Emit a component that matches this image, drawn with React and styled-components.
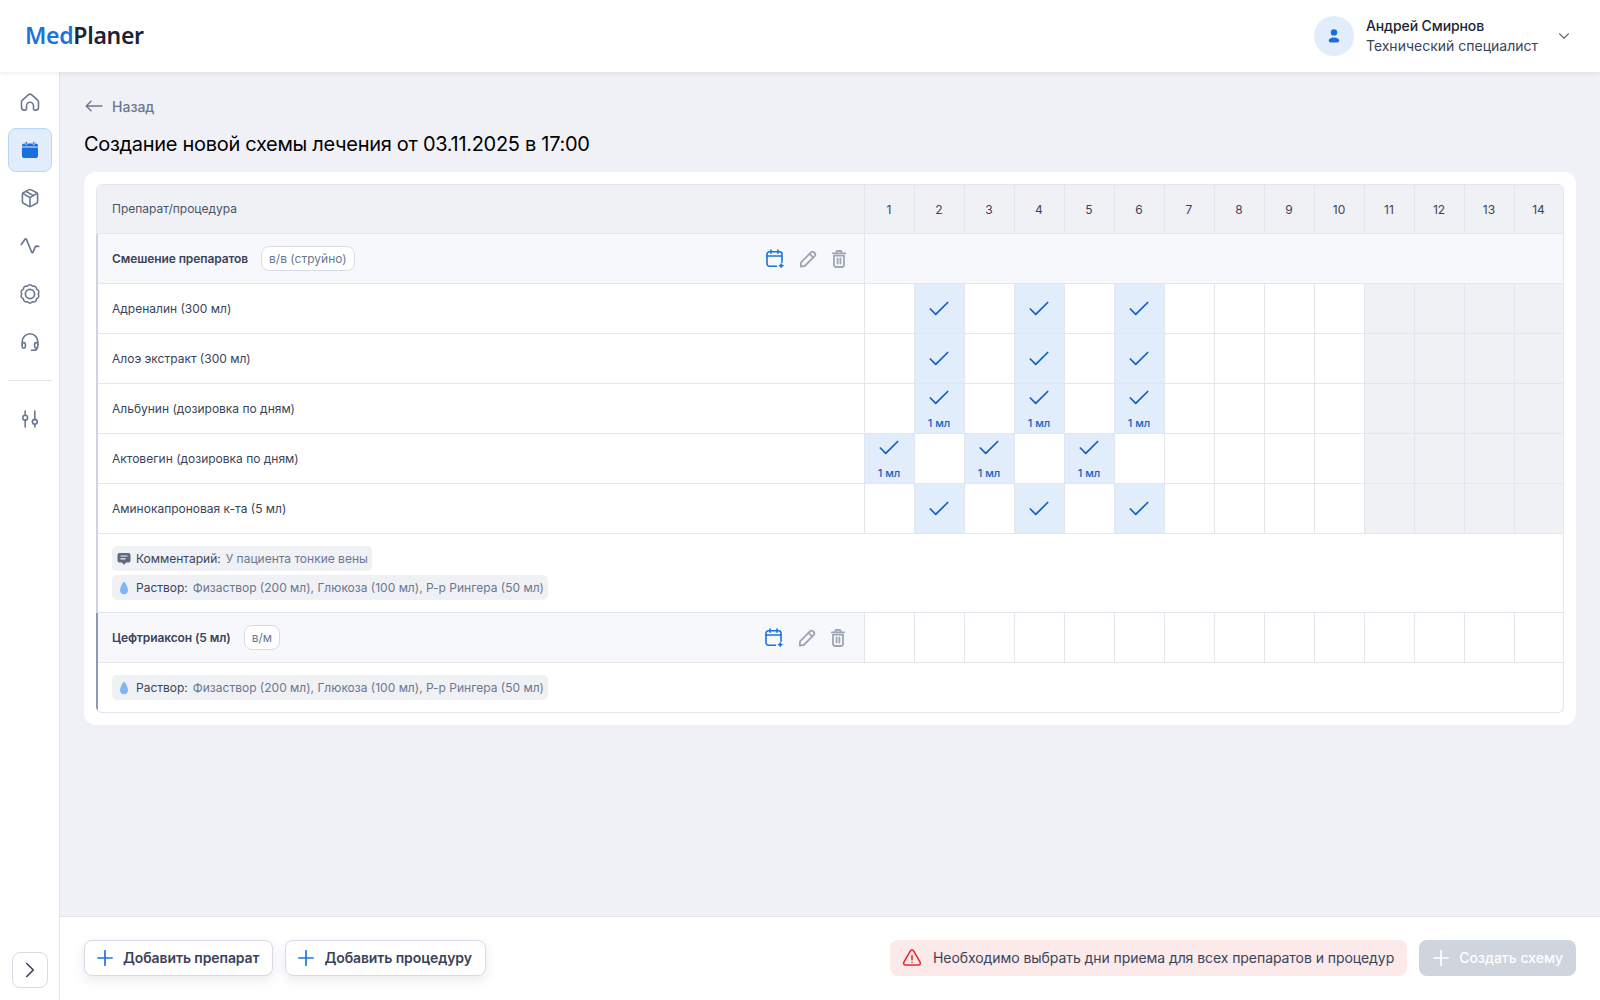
import React from "react";
import styled, { createGlobalStyle } from "styled-components";
import { ChevronDown, ChevronRight, Check } from "lucide-react";

const GlobalStyle = createGlobalStyle`
  html, body { margin: 0; padding: 0; height: 100%; }
  body { font-family: Inter, "Liberation Sans", sans-serif; background: #f0f1f6; color: #3a4459; }
  * { box-sizing: border-box; }
`;

const days = Array.from({ length: 14 }, (_, i) => i + 1);

const groupOne = [
  { name: "Адреналин (300 мл)", on: [2, 4, 6] },
  { name: "Алоэ экстракт (300 мл)", on: [2, 4, 6] },
  { name: "Альбунин (дозировка по дням)", on: [2, 4, 6], dose: true },
  { name: "Актовегин (дозировка по дням)", on: [1, 3, 5], dose: true },
  { name: "Аминокапроновая к-та (5 мл)", on: [2, 4, 6] },
];

const solution = "Физаствор (200 мл), Глюкоза (100 мл), Р-р Рингера (50 мл)";

// outer ring of the settings icon, small bumps around a circle
const scallop = (() => {
  const n = 10;
  const r = 8.1;
  const pts = Array.from({ length: n }, (_, i) => {
    const a = (i / n) * Math.PI * 2;
    return [10 + r * Math.cos(a), 10 + r * Math.sin(a)];
  });
  const arcs = pts.map((_, i) => {
    const p = pts[(i + 1) % n];
    return `A2.9 2.9 0 0 1 ${p[0].toFixed(2)} ${p[1].toFixed(2)}`;
  });
  return `M${pts[0][0].toFixed(2)} ${pts[0][1].toFixed(2)}${arcs.join("")}Z`;
})();

function HomeIcon() {
  return (
    <svg width="20" height="20" viewBox="0 0 20 20" fill="none" stroke="#6b7791" strokeWidth="1.6" strokeLinejoin="round" strokeLinecap="round">
      <path d="M2.2 8.3 8.2 2.9a2.7 2.7 0 0 1 3.6 0l6 5.4c.5.4.7 1 .7 1.6v5.4a2.8 2.8 0 0 1-2.8 2.8h-1.1a1.1 1.1 0 0 1-1.1-1.1v-3.2a3.5 3.5 0 0 0-7 0v3.2a1.1 1.1 0 0 1-1.1 1.1H4.3a2.8 2.8 0 0 1-2.8-2.8V9.9c0-.6.2-1.2.7-1.6Z" />
    </svg>
  );
}

function CalendarFillIcon() {
  return (
    <svg width="18" height="18" viewBox="0 0 18 18" fill="#1b6fdc">
      <path d="M1 4.6C1 3.3 2 2.4 3.4 2.4h11.2C16 2.4 17 3.3 17 4.6v.9H1v-.9Z" />
      <path d="M1 6.5h16v8.2c0 1.4-1.1 2.3-2.5 2.3h-11C2.1 17 1 16.1 1 14.7V6.5Z" />
      <rect x="4.4" y=".4" width="1.7" height="3.6" rx=".85" stroke="#e1edfb" strokeWidth=".6" />
      <rect x="11.9" y=".4" width="1.7" height="3.6" rx=".85" stroke="#e1edfb" strokeWidth=".6" />
    </svg>
  );
}

function BoxIcon() {
  return (
    <svg width="20" height="20" viewBox="0 0 20 20" fill="none" stroke="#6b7791" strokeWidth="1.6" strokeLinejoin="round" strokeLinecap="round">
      <path d="M8.6 1.9a2.8 2.8 0 0 1 2.8 0l5.3 2.9c.6.3.9.9.9 1.5v7.3c0 .7-.3 1.3-.9 1.6l-5.3 2.9a2.8 2.8 0 0 1-2.8 0l-5.3-2.9c-.6-.3-.9-.9-.9-1.6V6.3c0-.6.3-1.2.9-1.5l5.3-2.9Z" />
      <path d="M2.8 5.4 10 9.6l7.2-4.2M10 9.6v8.9M6 3.4l7.6 4.3" />
    </svg>
  );
}

function PulseIcon() {
  return (
    <svg width="20" height="20" viewBox="0 0 20 20" fill="none" stroke="#6b7791" strokeWidth="1.7" strokeLinejoin="round" strokeLinecap="round">
      <path d="M1.3 8.5 5 3.2c.4-.5 1.1-.5 1.4.1l5.3 12.9c.3.6 1 .7 1.4.1l2.1-5.4c.2-.5.6-.8 1.2-.8l2.3.3" />
    </svg>
  );
}

function RingIcon() {
  return (
    <svg width="20" height="20" viewBox="0 0 20 20" fill="none" stroke="#6b7791" strokeWidth="1.5" strokeLinejoin="round">
      <path d={scallop} />
      <circle cx="10" cy="10" r="4.6" strokeWidth="1.7" />
    </svg>
  );
}

function HeadsetIcon() {
  return (
    <svg width="20" height="20" viewBox="0 0 20 20" fill="none" stroke="#6b7791" strokeWidth="1.6" strokeLinejoin="round" strokeLinecap="round">
      <path d="M2.2 13V9.6a7.8 7.8 0 0 1 15.6 0V13" />
      <rect x="2.2" y="10.6" width="3.2" height="5.6" rx="1.6" />
      <rect x="14.6" y="10.6" width="3.2" height="5.6" rx="1.6" />
      <path d="M17.2 16c-.4 1.4-1.6 2.3-3.2 2.3h-2.6" />
    </svg>
  );
}

function SlidersIcon() {
  return (
    <svg width="20" height="20" viewBox="0 0 20 20" fill="none" stroke="#6b7791" strokeWidth="1.6" strokeLinecap="round">
      <path d="M5.2 2v4.2M5.2 11.2V18M14.8 2v8.4M14.8 15.2V18" />
      <circle cx="5.2" cy="8.7" r="2.4" />
      <circle cx="14.8" cy="12.8" r="2.4" />
    </svg>
  );
}

function UserIcon() {
  return (
    <svg width="16" height="16" viewBox="0 0 16 16" fill="#1b6fdc">
      <circle cx="8" cy="4.4" r="3.2" />
      <path d="M8 9.4c-3.1 0-5.3 1.4-5.3 3.2 0 1.2 1 1.9 2.2 1.9h6.2c1.2 0 2.2-.7 2.2-1.9 0-1.8-2.2-3.2-5.3-3.2Z" />
    </svg>
  );
}

function BackArrow() {
  return (
    <svg width="18" height="12" viewBox="0 0 18 12" fill="none" stroke="#6b7791" strokeWidth="1.4" strokeLinecap="round" strokeLinejoin="round">
      <path d="M17 6H1.2M6 1.2 1.2 6 6 10.8" />
    </svg>
  );
}

function CalendarPlusIcon() {
  return (
    <svg width="18" height="19" viewBox="0 0 18 19" fill="none" stroke="#1b73e0" strokeWidth="1.6" strokeLinecap="round" strokeLinejoin="round">
      <path d="M10.5 17.2H3.4A2.4 2.4 0 0 1 1 14.8V5.2a2.4 2.4 0 0 1 2.4-2.4h10.2A2.4 2.4 0 0 1 16 5.2v8" />
      <path d="M1 7h15M5 1v3.2M12 1v3.2M15.2 15v3.2M13.6 16.6h3.4" />
    </svg>
  );
}

function PencilIcon() {
  return (
    <svg width="18" height="18" viewBox="0 0 18 18" fill="none" stroke="#9ea5b4" strokeWidth="1.8" strokeLinecap="round" strokeLinejoin="round">
      <path d="M2 12.3 11.9 2.4a2.2 2.2 0 0 1 3.1 0l.6.6a2.2 2.2 0 0 1 0 3.1L5.7 16 1.8 16.6 2 12.3Z" />
      <path d="m10.6 3.9 3.5 3.5" />
    </svg>
  );
}

function TrashIcon() {
  return (
    <svg width="16" height="18" viewBox="-1 0 16 18" fill="none" stroke="#9ea5b4" strokeWidth="1.8" strokeLinecap="round" strokeLinejoin="round">
      <path d="M.8 3.4h12.4M4.4 3V2a1 1 0 0 1 1-1h3.2a1 1 0 0 1 1 1v1" />
      <path d="M2 5.6v9.2A2.2 2.2 0 0 0 4.2 17h5.6a2.2 2.2 0 0 0 2.2-2.2V5.6Z" />
      <path d="M5.6 8.4v5.2M8.4 8.4v5.2" />
    </svg>
  );
}

function CommentIcon() {
  return (
    <svg width="14" height="14" viewBox="0 0 14 14" fill="#5f6a80">
      <path d="M2.4 1h9.2a1.9 1.9 0 0 1 1.9 1.9v5.6a1.9 1.9 0 0 1-1.9 1.9H9.2L7 12.8 4.8 10.4H2.4A1.9 1.9 0 0 1 .5 8.5V2.9A1.9 1.9 0 0 1 2.4 1Z" />
      <path d="M3.5 4h7M3.5 6.8h5" stroke="#f0f1f6" strokeWidth="1.2" />
    </svg>
  );
}

function DropIcon() {
  return (
    <svg width="14" height="14" viewBox="0 0 14 14" fill="#7fb6f5">
      <path d="M7 .8c.4 0 2 2 2.9 4.3.6 1.5 1.1 2.9 1.1 4.1 0 2.4-1.8 4-4 4s-4-1.6-4-4c0-1.2.5-2.6 1.1-4.1C5 2.8 6.6.8 7 .8Z" />
    </svg>
  );
}

function WarningIcon() {
  return (
    <svg width="20" height="20" viewBox="0 0 20 20" fill="none" stroke="#e02d2d" strokeWidth="1.6" strokeLinecap="round" strokeLinejoin="round">
      <path d="M8.4 2.9a1.9 1.9 0 0 1 3.2 0l6.5 11.2a1.9 1.9 0 0 1-1.6 2.9H3.5a1.9 1.9 0 0 1-1.6-2.9L8.4 2.9Z" />
      <path d="M10 7.5v4.2M10 14.2v.1" />
    </svg>
  );
}

function PlusIcon({ color }) {
  return (
    <svg width="16" height="16" viewBox="0 0 16 16" fill="none" stroke={color} strokeWidth="1.7" strokeLinecap="round">
      <path d="M8 .8v14.4M.8 8h14.4" />
    </svg>
  );
}

function DayCell({ day, on, dose }) {
  const active = on.includes(day);
  return (
    <Cell $active={active} $off={day > 10} $top={active && dose}>
      {active && <Check size={26} strokeWidth={1.6} color="#1560bd" />}
      {active && dose && <Dose>1 мл</Dose>}
    </Cell>
  );
}

export default function App() {
  return (
    <Page>
      <GlobalStyle />
      <Header>
        <Logo>
          <LogoMed>Med</LogoMed>Planer
        </Logo>
        <UserBox>
          <Avatar>
            <UserIcon />
          </Avatar>
          <UserText>
            <UserName>Андрей Смирнов</UserName>
            <UserRole>Технический специалист</UserRole>
          </UserText>
          <ChevronDown size={18} strokeWidth={1.5} color="#5f6a80" />
        </UserBox>
      </Header>
      <Body>
        <Sidebar>
          <NavItem>
            <HomeIcon />
          </NavItem>
          <NavItem $active>
            <CalendarFillIcon />
          </NavItem>
          <NavItem>
            <BoxIcon />
          </NavItem>
          <NavItem>
            <PulseIcon />
          </NavItem>
          <NavItem>
            <RingIcon />
          </NavItem>
          <NavItem>
            <HeadsetIcon />
          </NavItem>
          <NavDivider />
          <NavItem>
            <SlidersIcon />
          </NavItem>
          <ToggleButton>
            <ChevronRight size={26} strokeWidth={1.5} color="#3a4459" />
          </ToggleButton>
        </Sidebar>
        <Main>
          <Content>
            <BackLink>
              <BackArrow />
              Назад
            </BackLink>
            <Title>Создание новой схемы лечения от 03.11.2025 в 17:00</Title>
            <Card>
              <Table>
                <HeadRow>
                  <HeadName>Препарат/процедура</HeadName>
                  {days.map((d) => (
                    <HeadDay key={d}>{d}</HeadDay>
                  ))}
                </HeadRow>
                <Group>
                  <Row>
                    <GroupName>
                      <GroupTitle>Смешение препаратов</GroupTitle>
                      <Tag>в/в (струйно)</Tag>
                      <Actions>
                        <CalendarPlusIcon />
                        <PencilIcon />
                        <TrashIcon />
                      </Actions>
                    </GroupName>
                    <GroupFill />
                  </Row>
                  {groupOne.map((item) => (
                    <Row key={item.name}>
                      <DrugName>{item.name}</DrugName>
                      {days.map((d) => (
                        <DayCell key={d} day={d} on={item.on} dose={item.dose} />
                      ))}
                    </Row>
                  ))}
                  <Notes>
                    <Chip>
                      <CommentIcon />
                      <ChipLabel>Комментарий:</ChipLabel>
                      <ChipText>У пациента тонкие вены</ChipText>
                    </Chip>
                    <Chip>
                      <DropIcon />
                      <ChipLabel>Раствор:</ChipLabel>
                      <ChipText>{solution}</ChipText>
                    </Chip>
                  </Notes>
                </Group>
                <Group $dark>
                  <Row>
                    <GroupName>
                      <GroupTitle>Цефтриаксон (5 мл)</GroupTitle>
                      <Tag>в/м</Tag>
                      <Actions $shifted>
                        <CalendarPlusIcon />
                        <PencilIcon />
                        <TrashIcon />
                      </Actions>
                    </GroupName>
                    {days.map((d) => (
                      <Cell key={d} />
                    ))}
                  </Row>
                  <Notes $last>
                    <Chip>
                      <DropIcon />
                      <ChipLabel>Раствор:</ChipLabel>
                      <ChipText>{solution}</ChipText>
                    </Chip>
                  </Notes>
                </Group>
              </Table>
            </Card>
          </Content>
          <Footer>
            <AddButton>
              <PlusIcon color="#1b73e0" />
              Добавить препарат
            </AddButton>
            <AddButton>
              <PlusIcon color="#1b73e0" />
              Добавить процедуру
            </AddButton>
            <Alert>
              <WarningIcon />
              Необходимо выбрать дни приема для всех препаратов и процедур
            </Alert>
            <CreateButton>
              <PlusIcon color="#fff" />
              Создать схему
            </CreateButton>
          </Footer>
        </Main>
      </Body>
    </Page>
  );
}

const Page = styled.div`
  width: 1600px;
  height: 1000px;
  display: flex;
  flex-direction: column;
  overflow: hidden;
`;

const Header = styled.header`
  height: 72px;
  flex: none;
  background: #fff;
  display: flex;
  align-items: center;
  justify-content: space-between;
  padding: 0 27px 0 25px;
  box-shadow: 0 1px 4px rgba(40, 50, 80, 0.1);
  position: relative;
  z-index: 2;
`;

const Logo = styled.div`
  font-family: "Noto Sans", sans-serif;
  font-size: 23px;
  font-weight: 600;
  letter-spacing: -0.3px;
  color: #1b2436;
  margin-top: -2px;
`;

const LogoMed = styled.span`
  color: #1b73e0;
`;

const UserBox = styled.div`
  display: flex;
  align-items: center;
`;

const Avatar = styled.div`
  width: 40px;
  height: 40px;
  border-radius: 50%;
  background: #e1edfb;
  display: flex;
  align-items: center;
  justify-content: center;
  margin-right: 12px;
`;

const UserText = styled.div`
  display: flex;
  flex-direction: column;
  margin-right: 17px;
`;

const UserName = styled.div`
  font-size: 14px;
  line-height: 20px;
  font-weight: 500;
  letter-spacing: -0.1px;
  color: #1b2436;
`;

const UserRole = styled.div`
  font-size: 14px;
  line-height: 20px;
  color: #3a4459;
`;

const Body = styled.div`
  flex: 1;
  display: flex;
  min-height: 0;
`;

const Sidebar = styled.aside`
  width: 60px;
  flex: none;
  background: #fff;
  border-right: 1px solid #e3e6ec;
  padding: 8px 7px 12px 8px;
  display: flex;
  flex-direction: column;
  gap: 4px;
`;

const NavItem = styled.div`
  width: 44px;
  height: 44px;
  flex: none;
  border-radius: 8px;
  display: flex;
  align-items: center;
  justify-content: center;
  background: ${(p) => (p.$active ? "#e1edfb" : "transparent")};
  border: 1px solid ${(p) => (p.$active ? "#b9d6f8" : "transparent")};
`;

const NavDivider = styled.div`
  height: 1px;
  flex: none;
  background: #e3e6ec;
  margin: 12px 0;
`;

const ToggleButton = styled.div`
  width: 36px;
  height: 36px;
  margin: auto 0 0 4px;
  border: 1px solid #d7dbe5;
  border-radius: 8px;
  display: flex;
  align-items: center;
  justify-content: center;
`;

const Main = styled.main`
  flex: 1;
  min-width: 0;
  display: flex;
  flex-direction: column;
`;

const Content = styled.div`
  flex: 1;
  min-height: 0;
  padding: 24px 24px 0;
`;

const BackLink = styled.div`
  height: 20px;
  padding-left: 1px;
  display: flex;
  align-items: center;
  gap: 9px;
  font-size: 14px;
  font-weight: 500;
  color: #6b7791;
`;

const Title = styled.h1`
  margin: 14px 0;
  font-size: 20px;
  line-height: 28px;
  font-weight: 400;
  letter-spacing: -0.3px;
  color: #000;
`;

const Card = styled.section`
  background: #fff;
  border-radius: 12px;
  padding: 12px;
`;

const Table = styled.div`
  border: 1px solid #e3e6ec;
  border-left: 0;
  border-radius: 6px;
  overflow: hidden;
`;

const Row = styled.div`
  display: grid;
  grid-template-columns: 1fr repeat(13, 50px) 49px;
  height: 50px;
  border-bottom: 1px solid #e3e6ec;
`;

const HeadRow = styled(Row)`
  height: 49px;
  background: #f0f1f5;
`;

const HeadName = styled.div`
  display: flex;
  align-items: center;
  padding: 0 0 1px 15px;
  font-size: 12px;
  color: #4a5468;
  border-left: 1px solid #e3e6ec;
`;

const HeadDay = styled.div`
  display: flex;
  align-items: center;
  justify-content: center;
  padding-right: 1px;
  font-size: 12px;
  color: #3a4459;
  border-left: 1px solid #e3e6ec;
`;

const Group = styled.div`
  border-left: 2px solid ${(p) => (p.$dark ? "#8e99b3" : "#cfd4e1")};
`;

const GroupName = styled.div`
  display: flex;
  align-items: center;
  padding-left: 14px;
  background: #f7f8fc;
`;

const GroupTitle = styled.span`
  font-size: 12px;
  font-weight: 600;
  letter-spacing: -0.1px;
  color: #3a4459;
`;

const Tag = styled.span`
  margin-left: 13px;
  height: 25px;
  padding: 0 7px;
  display: flex;
  align-items: center;
  font-size: 12px;
  color: #6b7791;
  background: #fff;
  border: 1px solid #d7dbe5;
  border-radius: 8px;
`;

const Actions = styled.div`
  margin-left: auto;
  padding-right: ${(p) => (p.$shifted ? "18px" : "17px")};
  display: flex;
  align-items: center;
  gap: 14.5px;
`;

const GroupFill = styled.div`
  grid-column: 2 / -1;
  background: #f7f8fc;
  border-left: 1px solid #e3e6ec;
`;

const DrugName = styled.div`
  display: flex;
  align-items: center;
  padding-left: 14px;
  font-size: 12px;
  color: #3a4459;
`;

const Cell = styled.div`
  border-left: 1px solid #e3e6ec;
  padding: ${(p) => (p.$top ? "1px" : "0")} 1px 0 0;
  display: flex;
  flex-direction: column;
  align-items: center;
  justify-content: ${(p) => (p.$top ? "flex-start" : "center")};
  background: ${(p) => (p.$active ? "#e1edfb" : p.$off ? "#f0f1f5" : "#fff")};
`;

const Dose = styled.span`
  font-size: 11px;
  line-height: 12px;
  font-weight: 500;
  color: #1560bd;
  margin-top: 6px;
`;

const Notes = styled.div`
  padding: 12px 14px;
  display: flex;
  flex-direction: column;
  align-items: flex-start;
  gap: 4px;
  border-bottom: ${(p) => (p.$last ? "0" : "1px solid #e3e6ec")};
`;

const Chip = styled.div`
  height: 25px;
  padding: 0 4px 0 5px;
  display: flex;
  align-items: center;
  font-size: 12px;
  background: #f0f1f5;
  border-radius: 5px;
`;

const ChipLabel = styled.span`
  margin-left: 5px;
  color: #3a4459;
`;

const ChipText = styled.span`
  margin-left: 5px;
  color: #6b7791;
`;

const Footer = styled.footer`
  height: 84px;
  flex: none;
  background: #fff;
  border-top: 1px solid #e3e6ec;
  padding: 0 24px 2px;
  display: flex;
  align-items: center;
  gap: 12px;
`;

const AddButton = styled.div`
  height: 36px;
  padding: 0 13px 0 12px;
  display: flex;
  align-items: center;
  gap: 10px;
  font-size: 14px;
  font-weight: 600;
  letter-spacing: -0.1px;
  color: #3a4459;
  background: #fff;
  border: 1px solid #d7dbe5;
  border-radius: 8px;
  box-shadow: 0 4px 12px rgba(40, 50, 80, 0.1);
`;

const Alert = styled.div`
  margin-left: auto;
  height: 36px;
  padding: 0 13px 0 12px;
  display: flex;
  align-items: center;
  gap: 11px;
  font-size: 14px;
  letter-spacing: -0.065px;
  color: #3a4459;
  background: #fce9e9;
  border-radius: 8px;
  white-space: nowrap;
`;

const CreateButton = styled.div`
  height: 36px;
  padding: 0 13px 0 14px;
  display: flex;
  align-items: center;
  gap: 10px;
  font-size: 14px;
  font-weight: 500;
  color: #fff;
  background: #cfd4dd;
  border-radius: 8px;
`;
